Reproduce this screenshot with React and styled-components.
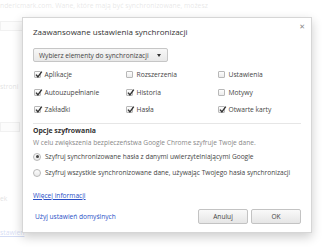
import React from "react";
import styled, { createGlobalStyle } from "styled-components";

const Global = createGlobalStyle`
  html, body { margin: 0; padding: 0; background: #fff; }
  body { font-family: "Open Sans", "Noto Sans", sans-serif; }
  * { box-sizing: border-box; }
`;

const Page = styled.div`
  position: relative;
  width: 325px;
  height: 249px;
  overflow: hidden;
  background: #fff;
`;

const Backdrop = styled.div`
  display: flex;
  flex-direction: column;
  font-size: 6.8px;
  color: #555;
`;

const BgLine = styled.div`
  height: ${(p) => p.$h || 12}px;
  margin-top: ${(p) => p.$mt || 0}px;
  line-height: ${(p) => p.$h || 12}px;
  white-space: nowrap;
  color: ${(p) => p.$color || "#666"};
  text-decoration: ${(p) => (p.$link ? "underline" : "none")};
`;

const BgBox = styled.div`
  display: inline-block;
  vertical-align: middle;
  height: 10px;
  width: ${(p) => p.$w}px;
  border: 1px solid #bbb;
  background: #eee;
  margin-right: 18px;
`;

const Veil = styled.div`
  position: absolute;
  inset: 0;
  background: rgba(255, 255, 255, 0.8);
`;

const Dialog = styled.div`
  position: absolute;
  left: 22px;
  top: 17px;
  width: 290px;
  height: 216px;
  background: #fff;
  border: 1px solid #d6d6d6;
  box-shadow: 0 4px 10px rgba(0, 0, 0, 0.2);
  padding: 8px 10px 8px 10px;
  display: flex;
  flex-direction: column;
  color: #333;
`;

const Close = styled.div`
  position: absolute;
  right: 6px;
  top: 5px;
  font-size: 7px;
  color: #888;
  line-height: 8px;
  font-family: "DejaVu Sans", sans-serif;
`;

const Title = styled.div`
  font-size: 8px;
  line-height: 12px;
  color: #333;
`;

const Select = styled.div`
  margin-top: 10px;
  align-self: flex-start;
  height: 14px;
  padding: 0 6px 0 5px;
  display: flex;
  align-items: center;
  gap: 6px;
  border: 1px solid #c6c6c6;
  border-radius: 2px;
  background: linear-gradient(#f7f7f7, #e8e8e8);
  font-size: 6.6px;
  color: #444;
`;

const Arrow = styled.span`
  width: 0;
  height: 0;
  border-left: 2.5px solid transparent;
  border-right: 2.5px solid transparent;
  border-top: 3px solid #333;
  margin-left: 2px;
`;

const Grid = styled.div`
  margin-top: 4px;
  display: grid;
  grid-template-columns: 92px 92px 1fr;
  grid-auto-rows: 17.5px;
`;

const Item = styled.label`
  display: flex;
  align-items: center;
  gap: 4px;
  font-size: 6.7px;
  color: #444;
`;

const Box = styled.span`
  width: 7px;
  height: 7px;
  border: 1px solid #b8b8b8;
  border-radius: 1px;
  background: linear-gradient(#fdfdfd, #ececec);
  position: relative;
  flex: none;
  margin-left: 0.5px;
`;

const Check = styled.svg`
  position: absolute;
  left: -1px;
  top: -2px;
`;

const Sep = styled.div`
  margin-top: 4px;
  height: 1px;
  background: #e6e6e6;
`;

const SectionTitle = styled.div`
  margin-top: 1px;
  font-size: 6.9px;
  line-height: 12px;
  font-weight: bold;
  color: #333;
`;

const Desc = styled.div`
  font-size: 6.6px;
  line-height: 12px;
  color: #888;
  white-space: nowrap;
`;

const RadioRow = styled.div`
  height: 16px;
  display: flex;
  align-items: center;
  gap: 4px;
  font-size: 6.6px;
  color: #444;
  white-space: nowrap;
`;

const Radio = styled.span`
  width: 8px;
  height: 8px;
  border-radius: 50%;
  border: 1px solid #b8b8b8;
  background: linear-gradient(#fdfdfd, #e9e9e9);
  display: flex;
  align-items: center;
  justify-content: center;
  flex: none;
  &::after {
    content: "";
    width: 3px;
    height: 3px;
    border-radius: 50%;
    background: ${(p) => (p.$on ? "#444" : "transparent")};
  }
`;

const Link = styled.a`
  font-size: 6.6px;
  line-height: 12px;
  color: #2a4fc7;
  text-decoration: ${(p) => (p.$under ? "underline" : "none")};
  cursor: pointer;
`;

const Footer = styled.div`
  margin-top: auto;
  display: flex;
  align-items: center;
  gap: 3px;
  padding-left: 2px;
`;

const Spacer = styled.div`
  flex: 1;
`;

const Button = styled.button`
  width: 50px;
  height: 15px;
  border: 1px solid #c3c3c3;
  border-radius: 2px;
  background: linear-gradient(#f9f9f9, #e6e6e6);
  font-family: "Open Sans", sans-serif;
  font-size: 6.6px;
  color: #444;
  padding: 0;
`;

const CheckBox = ({ on }) => (
  <Box>
    {on && (
      <Check width="9" height="9" viewBox="0 0 9 9">
        <path d="M2 4.6 L3.9 6.8 L7.8 1.6" fill="none" stroke="#333" strokeWidth="1.4" />
      </Check>
    )}
  </Box>
);

const items = [
  ["Aplikacje", true],
  ["Rozszerzenia", false],
  ["Ustawienia", false],
  ["Autouzupełnianie", true],
  ["Historia", true],
  ["Motywy", false],
  ["Zakładki", true],
  ["Hasła", true],
  ["Otwarte karty", true],
];

export default function App() {
  return (
    <Page>
      <Global />
      <Backdrop>
        <BgLine $color="#888">ndericmark.com. Wane, które mają być synchronizowane, możesz</BgLine>
        <BgLine $mt={9} $h={10}>
          <BgBox $w={24} />
        </BgLine>
        <BgLine $mt={50}>stroni</BgLine>
        <BgLine $mt={28}>
          <BgBox $w={20} />
          <BgBox $w={12} />
        </BgLine>
        <BgLine $mt={60}>ek</BgLine>
        <BgLine $mt={22} $color="#2a4fc7" $link>stawien</BgLine>
      </Backdrop>
      <Veil />
      <Dialog>
        <Close>✕</Close>
        <Title>Zaawansowane ustawienia synchronizacji</Title>
        <Select>
          Wybierz elementy do synchronizacji
          <Arrow />
        </Select>
        <Grid>
          {items.map(([label, on]) => (
            <Item key={label}>
              <CheckBox on={on} />
              {label}
            </Item>
          ))}
        </Grid>
        <Sep />
        <SectionTitle>Opcje szyfrowania</SectionTitle>
        <Desc>W celu zwiększenia bezpieczeństwa Google Chrome szyfruje Twoje dane.</Desc>
        <RadioRow>
          <Radio $on />
          Szyfruj synchronizowane hasła z danymi uwierzytelniającymi Google
        </RadioRow>
        <RadioRow>
          <Radio />
          Szyfruj wszystkie synchronizowane dane, używając Twojego hasła synchronizacji
        </RadioRow>
        <div>
          <Link $under>Więcej informacji</Link>
        </div>
        <Footer>
          <Link>Użyj ustawień domyślnych</Link>
          <Spacer />
          <Button>Anuluj</Button>
          <Button>OK</Button>
        </Footer>
      </Dialog>
    </Page>
  );
}
